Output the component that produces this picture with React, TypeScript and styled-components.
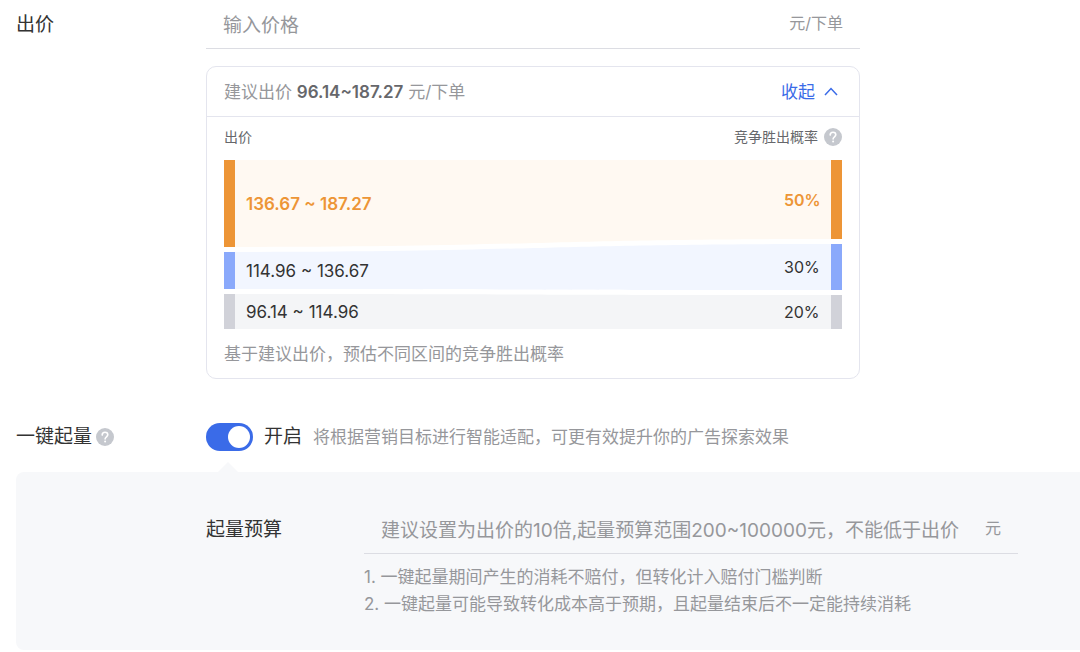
import React, { useState } from "react";
import styled, { createGlobalStyle } from "styled-components";

const GlobalStyle = createGlobalStyle`
  *, *::before, *::after { box-sizing: border-box; }
  body {
    margin: 0;
    background: #fff;
    color: #333;
    font-family: Inter, "Noto Sans CJK SC", sans-serif;
    font-size: 17px;
    line-height: 28px;
  }
  button, input { font: inherit; }
`;

const Page = styled.form`
  padding: 0 0 2px 16px;
`;

const FormRow = styled.div<{ $labelWidth: number }>`
  display: grid;
  grid-template-columns: ${(p) => p.$labelWidth}px minmax(0, 1fr);
`;

const FieldLabel = styled.label`
  display: flex;
  align-items: center;
  gap: 4px;
  height: 50px;
  font-size: 19px;
  white-space: nowrap;
`;

const FieldBody = styled.div`
  max-width: 654px;
`;

const InputLine = styled.div`
  display: flex;
  align-items: center;
  gap: 26px;
  height: 49px;
  padding: 0 17px;
  border-bottom: 1px solid #dcdde3;
`;

const TextInput = styled.input`
  flex: 1;
  min-width: 0;
  height: 40px;
  padding: 2px 0 0;
  border: 0;
  outline: 0;
  background: transparent;
  color: #333;
  font-size: 19px;
  &::placeholder {
    color: #96979b;
    opacity: 1;
  }
`;

const Unit = styled.span`
  padding-bottom: 2px;
  color: #96979b;
  font-size: 16px;
`;

const Card = styled.section`
  margin-top: 17px;
  border: 1px solid #e4e5ee;
  border-radius: 10px;
`;

const CardHeader = styled.header`
  display: flex;
  align-items: center;
  justify-content: space-between;
  height: 50px;
  padding: 0 17px;
  border-bottom: 1px solid #e4e5ee;
  color: #96979b;
`;

const Suggestion = styled.p`
  margin: 0;
  strong {
    color: #66676b;
    font-weight: 600;
  }
`;

const CollapseButton = styled.button`
  display: flex;
  align-items: center;
  gap: 9px;
  padding: 0 4px 0 0;
  border: 0;
  background: none;
  color: #3a6be8;
  cursor: pointer;
`;

const CardBody = styled.div`
  padding: 6px 17px 10px;
`;

const ChartHeader = styled.div`
  display: flex;
  align-items: center;
  justify-content: space-between;
  height: 28px;
  margin-bottom: 9px;
  color: #66676b;
  font-size: 14px;
`;

const ChartTitle = styled.span`
  display: flex;
  align-items: center;
  gap: 6px;
`;

const Chart = styled.div`
  position: relative;
  display: flex;
  justify-content: space-between;
`;

const Flow = styled.svg`
  position: absolute;
  top: 0;
  left: 11px;
  width: calc(100% - 22px);
  height: 100%;
`;

const Scale = styled.ul`
  position: relative;
  display: flex;
  flex-direction: column;
  gap: 5px;
  margin: 0;
  padding: 0;
  list-style: none;
`;

const ScaleItem = styled.li<{ $height: number; $bar: string; $end?: boolean; $strong?: boolean }>`
  display: flex;
  align-items: center;
  height: ${(p) => p.$height}px;
  ${(p) => (p.$end ? "width: 58px; border-right" : "padding-left: 11px; border-left")}: 11px solid ${(p) => p.$bar};
  color: ${(p) => (p.$strong ? "#ed9536" : "#333")};
  font-size: ${(p) => (p.$end ? 16 : 17)}px;
  font-weight: ${(p) => (p.$strong ? 600 : 400)};
  white-space: nowrap;
`;

const Caption = styled.p`
  margin: 11px 0 0;
  color: #96979b;
`;

const SwitchRow = styled(FormRow)`
  margin-top: 33px;
  align-items: center;
`;

const SwitchBody = styled.div`
  display: flex;
  align-items: center;
`;

const SwitchLabel = styled.label`
  display: flex;
  align-items: center;
  gap: 11px;
  font-size: 19px;
  white-space: nowrap;
  cursor: pointer;
`;

const Switch = styled.input`
  display: flex;
  align-items: center;
  width: 47px;
  height: 28px;
  margin: 0;
  padding: 3px;
  border-radius: 14px;
  appearance: none;
  background: #c5c8cf;
  cursor: pointer;
  &::before {
    content: "";
    width: 22px;
    height: 22px;
    border-radius: 50%;
    background: #fff;
  }
  &:checked {
    justify-content: flex-end;
    background: #3a6be8;
  }
`;

const Hint = styled.span`
  margin-left: 11px;
  color: #96979b;
`;

const Panel = styled.section`
  position: relative;
  margin-top: 10px;
  padding: 33px 0 32px 190px;
  border-radius: 8px 0 0 8px;
  background: #f7f8fa;
  &::before {
    content: "";
    position: absolute;
    top: -10px;
    left: 202px;
    border: solid transparent;
    border-width: 0 10px 10px;
    border-bottom-color: #f7f8fa;
  }
`;

const Notes = styled.div`
  margin-top: 10px;
  color: #96979b;
  line-height: 27px;
  p { margin: 0; }
`;

const HelpButton = styled.button`
  display: flex;
  padding: 0;
  border: 0;
  background: none;
  cursor: pointer;
`;

const BANDS = [
  { range: "136.67 ~ 187.27", rate: "50%", left: 87, right: 79, bar: "#ed9536", fill: "#fff9f2", strong: true },
  { range: "114.96 ~ 136.67", rate: "30%", left: 37, right: 46, bar: "#8aa9fb", fill: "#f2f6ff", strong: false },
  { range: "96.14 ~ 114.96", rate: "20%", left: 35, right: 34, bar: "#d1d2d9", fill: "#f4f5f7", strong: false },
];

const GAP = 5;

function bandPath(index: number) {
  const before = BANDS.slice(0, index);
  const l0 = before.reduce((sum, b) => sum + b.left + GAP, 0);
  const r0 = before.reduce((sum, b) => sum + b.right + GAP, 0);
  const l1 = l0 + BANDS[index].left;
  const r1 = r0 + BANDS[index].right;
  return `M0 ${l0}C298 ${l0} 298 ${r0} 596 ${r0}V${r1}C298 ${r1} 298 ${l1} 0 ${l1}Z`;
}

function Help({ label }: { label: string }) {
  return (
    <HelpButton type="button" aria-label={label}>
      <svg width="18" height="18" viewBox="0 0 18 18" fill="none" aria-hidden="true">
        <circle cx="9" cy="9" r="9" fill="#c5c8ce" />
        <path
          d="M6.2 7.1C6.2 5.3 7.4 4.2 9 4.2S11.8 5.3 11.8 6.8C11.8 8.7 9.1 8.9 9.1 11"
          stroke="#fff"
          strokeWidth="1.6"
          strokeLinecap="round"
        />
        <circle cx="9.1" cy="13.5" r="1" fill="#fff" />
      </svg>
    </HelpButton>
  );
}

export default function App() {
  const [open, setOpen] = useState(true);
  const [boost, setBoost] = useState(true);

  return (
    <>
      <GlobalStyle />
      <Page>
        <FormRow $labelWidth={190}>
          <FieldLabel htmlFor="bid">出价</FieldLabel>
          <FieldBody>
            <InputLine>
              <TextInput id="bid" placeholder="输入价格" />
              <Unit>元/下单</Unit>
            </InputLine>
            <Card>
              <CardHeader>
                <Suggestion>
                  建议出价 <strong>96.14~187.27</strong> 元/下单
                </Suggestion>
                <CollapseButton type="button" aria-expanded={open} onClick={() => setOpen(!open)}>
                  {open ? "收起" : "展开"}
                  <svg width="14" height="10" viewBox="0 0 14 10" fill="none" aria-hidden="true">
                    <path d={open ? "M1 8L7 1.5L13 8" : "M1 2L7 8.5L13 2"} stroke="currentColor" strokeWidth="1.5" />
                  </svg>
                </CollapseButton>
              </CardHeader>
              {open && (
                <CardBody>
                  <ChartHeader>
                    <span>出价</span>
                    <ChartTitle>
                      竞争胜出概率
                      <Help label="竞争胜出概率说明" />
                    </ChartTitle>
                  </ChartHeader>
                  <Chart>
                    <Flow viewBox="0 0 596 169" preserveAspectRatio="none" aria-hidden="true">
                      {BANDS.map((b, i) => (
                        <path key={b.range} d={bandPath(i)} fill={b.fill} />
                      ))}
                    </Flow>
                    <Scale>
                      {BANDS.map((b) => (
                        <ScaleItem key={b.range} $height={b.left} $bar={b.bar} $strong={b.strong}>
                          {b.range}
                        </ScaleItem>
                      ))}
                    </Scale>
                    <Scale>
                      {BANDS.map((b) => (
                        <ScaleItem key={b.rate} $height={b.right} $bar={b.bar} $strong={b.strong} $end>
                          {b.rate}
                        </ScaleItem>
                      ))}
                    </Scale>
                  </Chart>
                  <Caption>基于建议出价，预估不同区间的竞争胜出概率</Caption>
                </CardBody>
              )}
            </Card>
          </FieldBody>
        </FormRow>

        <SwitchRow $labelWidth={190}>
          <FieldLabel as="div">
            一键起量
            <Help label="一键起量说明" />
          </FieldLabel>
          <SwitchBody>
            <SwitchLabel>
              <Switch type="checkbox" role="switch" checked={boost} onChange={(e) => setBoost(e.target.checked)} />
              开启
            </SwitchLabel>
            <Hint>将根据营销目标进行智能适配，可更有效提升你的广告探索效果</Hint>
          </SwitchBody>
        </SwitchRow>

        {boost && (
          <Panel>
            <FormRow $labelWidth={158}>
              <FieldLabel htmlFor="budget">起量预算</FieldLabel>
              <FieldBody>
                <InputLine>
                  <TextInput
                    id="budget"
                    placeholder="建议设置为出价的10倍,起量预算范围200~100000元，不能低于出价"
                  />
                  <Unit>元</Unit>
                </InputLine>
                <Notes>
                  <p>1. 一键起量期间产生的消耗不赔付，但转化计入赔付门槛判断</p>
                  <p>2. 一键起量可能导致转化成本高于预期，且起量结束后不一定能持续消耗</p>
                </Notes>
              </FieldBody>
            </FormRow>
          </Panel>
        )}
      </Page>
    </>
  );
}
